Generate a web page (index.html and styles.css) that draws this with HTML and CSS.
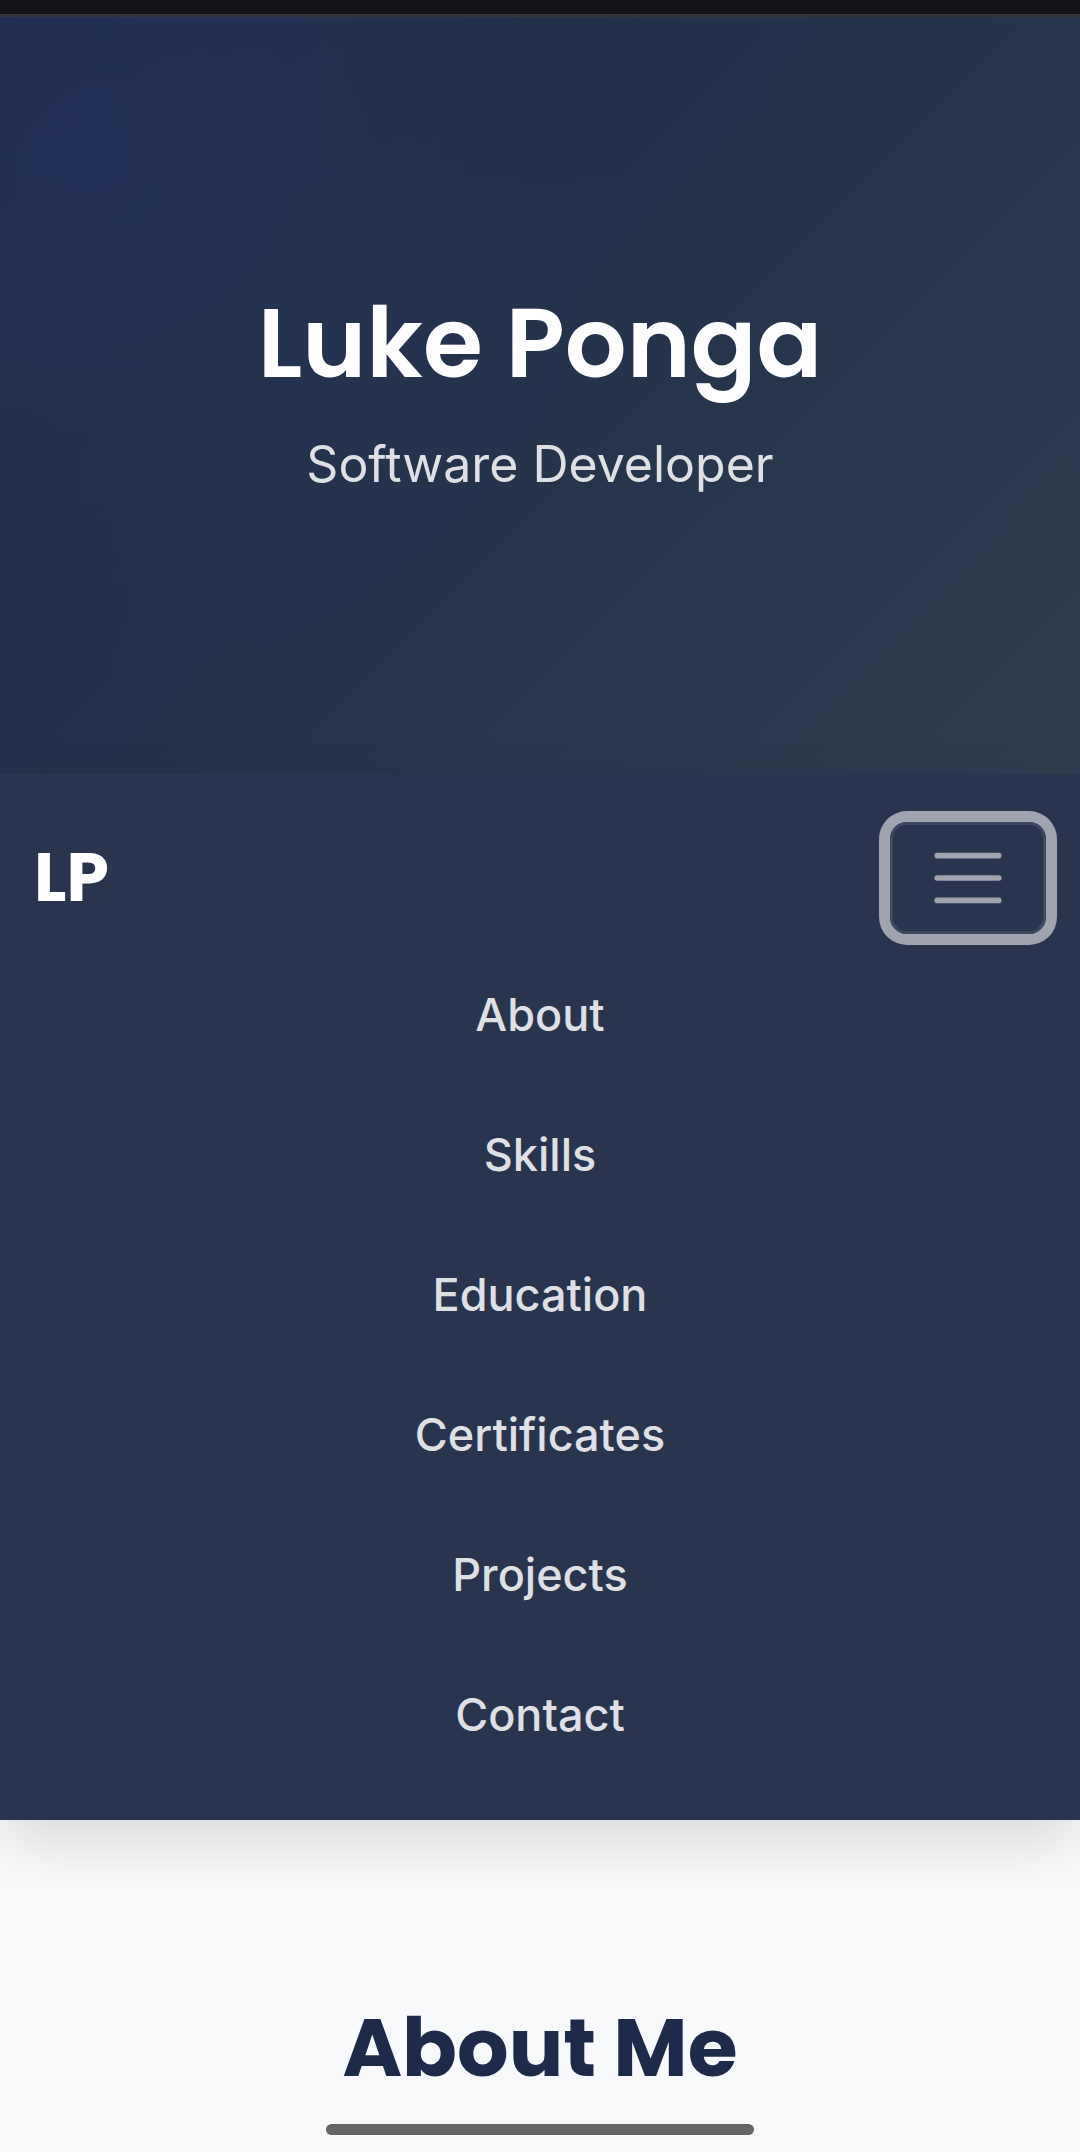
FILE: index.html
```html
<!DOCTYPE html>
<html lang="en">
<head>
<meta charset="utf-8">
<meta name="viewport" content="width=device-width, initial-scale=1">
<title>Luke Ponga</title>
<link rel="stylesheet" href="styles.css">
</head>
<body>
<header class="hero">
  <h1 class="hero-title">Luke Ponga</h1>
  <p class="hero-subtitle">Software Developer</p>
</header>
<nav class="navbar" aria-label="Main">
  <div class="navbar-top">
    <a class="brand" href="#">LP</a>
    <button class="toggler" type="button" aria-label="Toggle navigation" aria-expanded="true" aria-controls="menu">
      <svg class="toggler-icon" viewBox="0 0 30 30" aria-hidden="true"><path d="M4 7h22M4 15h22M4 23h22" fill="none" stroke="currentColor" stroke-width="2" stroke-linecap="round"/></svg>
    </button>
  </div>
  <ul class="menu" id="menu">
    <li><a class="menu-link" href="#about">About</a></li>
    <li><a class="menu-link" href="#skills">Skills</a></li>
    <li><a class="menu-link" href="#education">Education</a></li>
    <li><a class="menu-link" href="#certificates">Certificates</a></li>
    <li><a class="menu-link" href="#projects">Projects</a></li>
    <li><a class="menu-link" href="#contact">Contact</a></li>
  </ul>
</nav>
<main>
  <section class="section" id="about">
    <h2 class="section-title">About Me</h2>
  </section>
</main>
</body>
</html>
```
FILE: styles.css
```css
* {
  box-sizing: border-box;
}

body {
  margin: 0;
  border-top: 14px solid #121317;
  background: #f8f9fb;
  font-family: Inter, sans-serif;
}

.hero {
  display: flex;
  flex-direction: column;
  align-items: center;
  gap: 27px;
  padding: 268px 34px 274px;
  border-top: 3px solid #333537;
  text-align: center;
  background:
    radial-gradient(circle at 10% 20%, rgba(64, 80, 200, 0.11), transparent 45%),
    linear-gradient(135deg, #1f2c4b, #23314a 40%, #2c3e4f) border-box;
}

.hero-title {
  margin: 0;
  color: #fff;
  font-family: Poppins, Inter, sans-serif;
  font-size: 97px;
  font-weight: 600;
  line-height: 116px;
}

.hero-subtitle {
  margin: 0;
  color: #dee0e5;
  font-size: 50px;
  line-height: 72px;
}

.navbar {
  position: relative;
  padding: 48px 34px 35px;
  background: #29344f;
  box-shadow: 0 22px 56px rgba(0, 0, 0, 0.12);
}

.navbar-top {
  display: flex;
  align-items: center;
  justify-content: space-between;
}

.brand {
  color: #fff;
  font-family: Poppins, Inter, sans-serif;
  font-size: 68px;
  font-weight: 700;
  line-height: 100px;
  text-decoration: none;
}

.toggler {
  display: flex;
  padding: 11px 33px;
  border: 3px solid #3e4861;
  border-radius: 17px;
  background: transparent;
  color: #a0a4b0;
  box-shadow: 0 0 0 11px #a0a4b0;
}

.toggler-icon {
  width: 84px;
  height: 84px;
}

.menu {
  margin: 11px 0 0;
  padding: 0;
  list-style: none;
}

.menu-link {
  display: block;
  color: #dee0e5;
  font-size: 45px;
  font-weight: 500;
  line-height: 140px;
  text-align: center;
  text-decoration: none;
}

.section {
  display: flex;
  justify-content: center;
  padding: 168px 34px 0;
}

.section-title {
  margin: 0;
  color: #1e2a4a;
  font-family: Poppins, Inter, sans-serif;
  font-size: 81px;
  font-weight: 700;
  line-height: 120px;
}

.section-title::after {
  content: "";
  display: block;
  height: 11px;
  margin: 16px -16px;
  border-radius: 6px;
  background: #666;
}
```
